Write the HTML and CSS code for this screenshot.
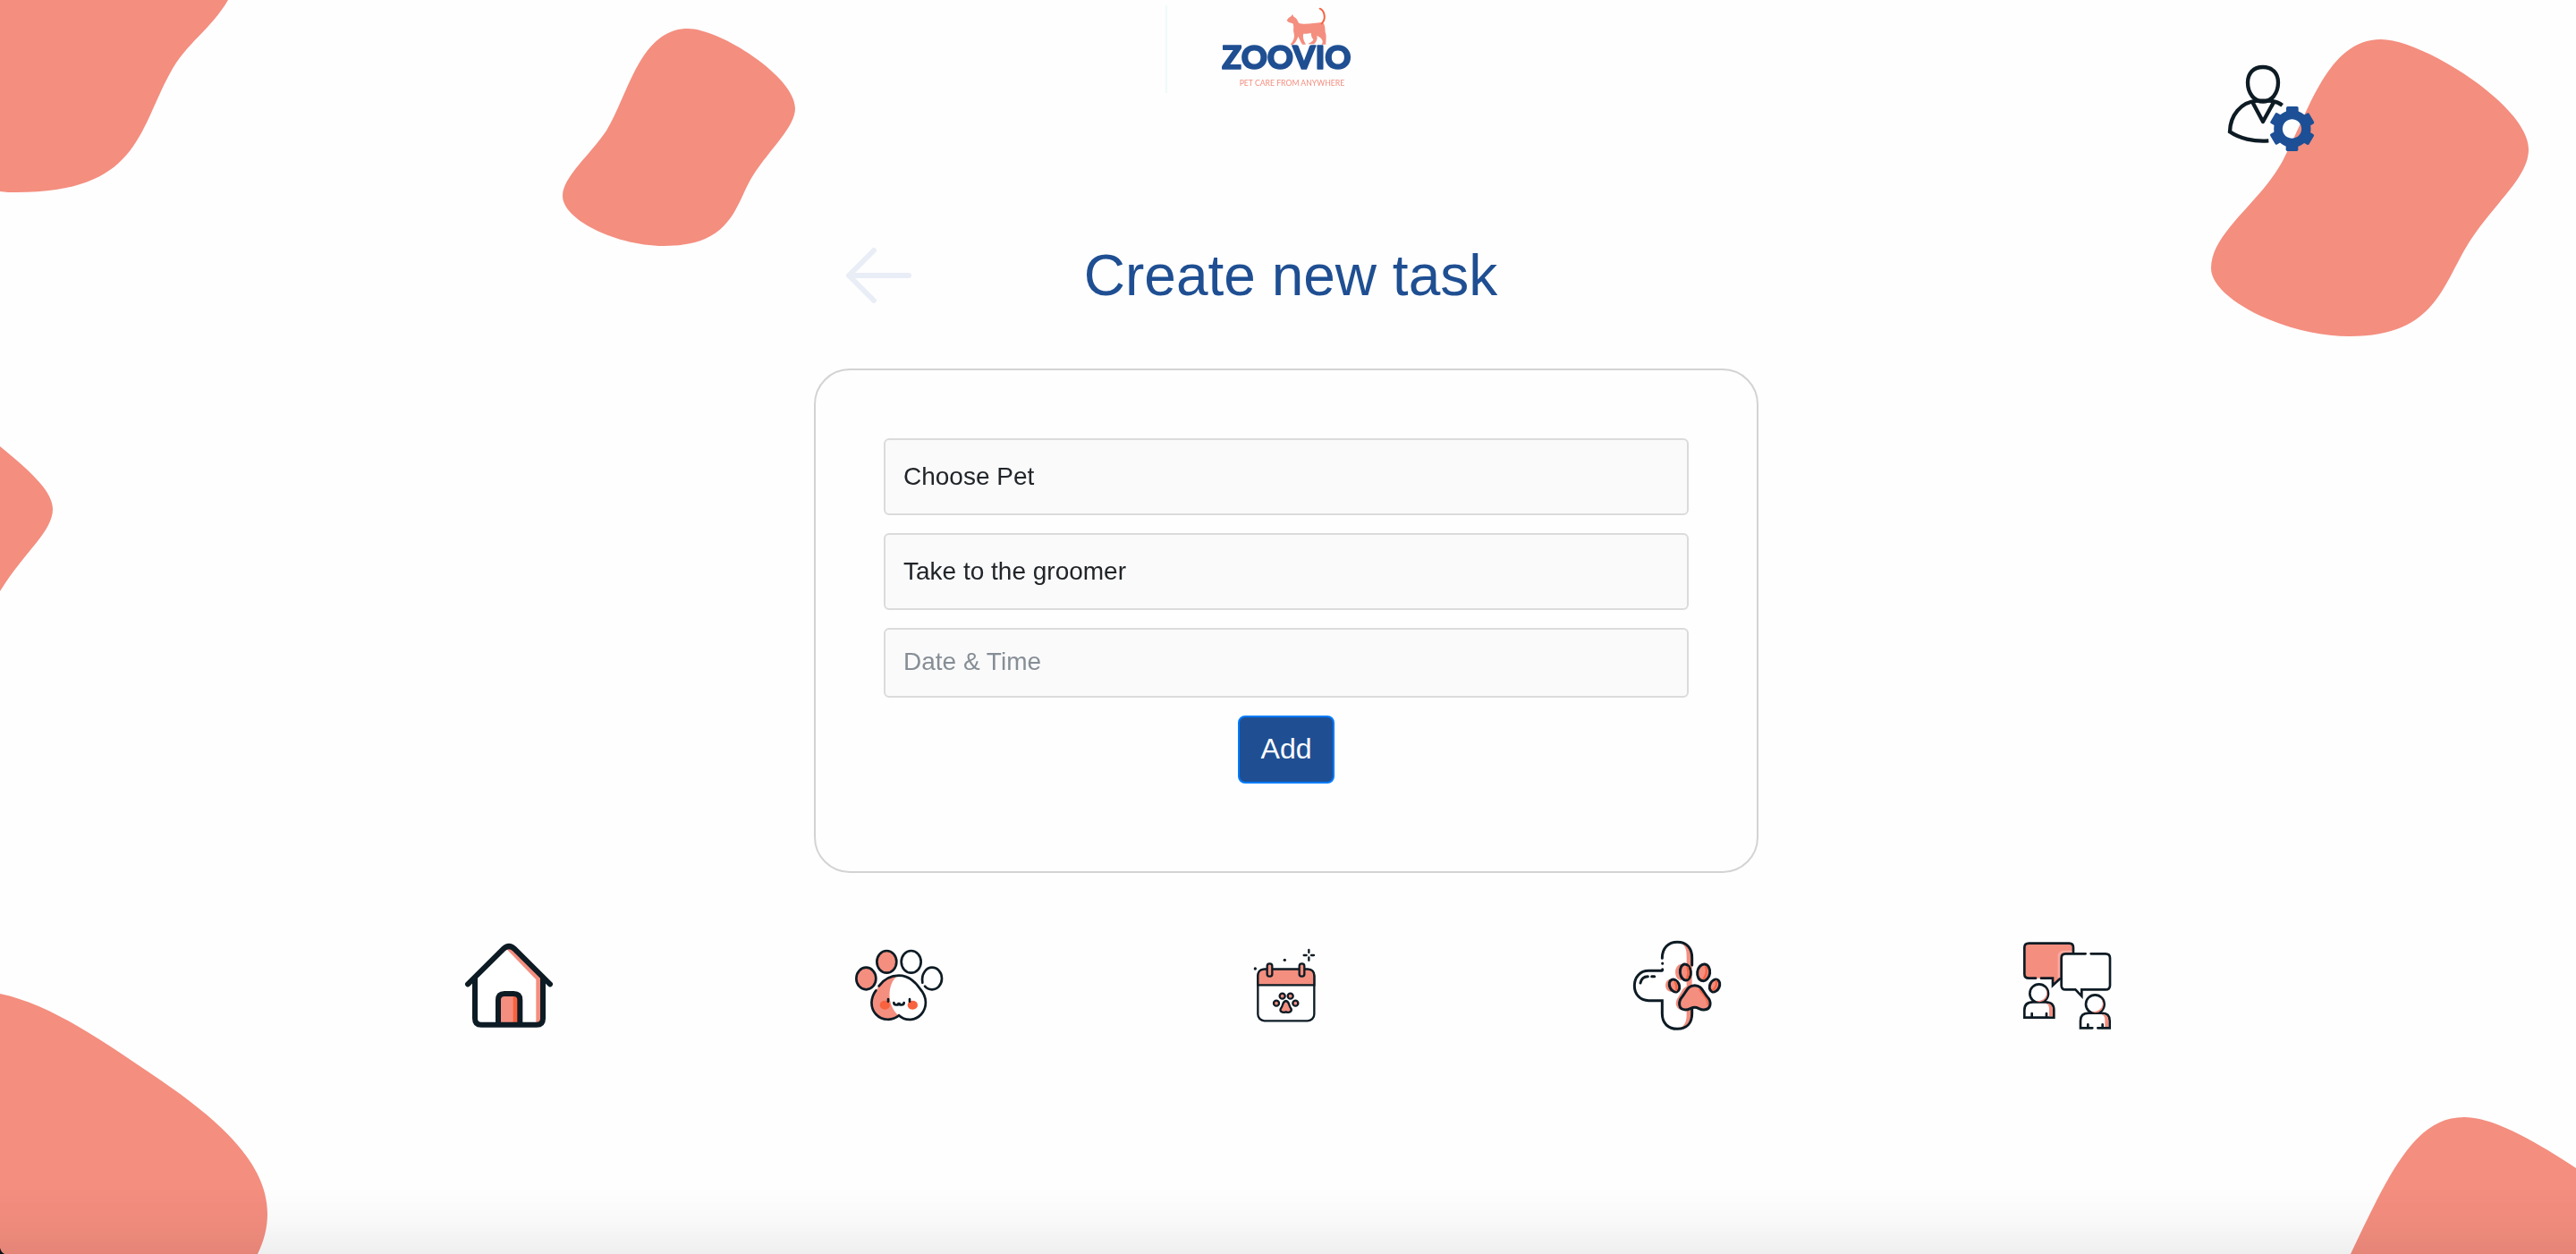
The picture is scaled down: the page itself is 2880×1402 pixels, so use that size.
FILE: index.html
```html
<!DOCTYPE html>
<html lang="en">
<head>
<meta charset="utf-8">
<meta name="viewport" content="width=device-width, initial-scale=1">
<title>Zoovio - Create new task</title>
<link rel="stylesheet" href="styles.css">
</head>
<body>
<svg class="backdrop" viewBox="0 0 2880 1402" preserveAspectRatio="xMidYMid slice" aria-hidden="true">
  <path d="M0 0H255C235 34 209 47 190 82C154 148 154 215 18 215C12 215 6 215 0 214Z"/>
  <path d="M769 32C805 32 889 86 889 121C889 142 862 165 842 196C822 227 821 275 742 275C690 275 629 246 629 219C629 198 660 173 678 146C702 108 715 32 769 32Z"/>
  <path d="M0 499C30 524 59 548 59 569C59 594 29 615 0 661Z"/>
  <path d="M2662 44C2708 44 2827 118 2827 167C2827 198 2790 226 2763 267C2731 315 2726 376 2627 376C2555 376 2472 334 2472 300C2472 260 2526 228 2552 180C2582 124 2602 44 2662 44Z"/>
  <path d="M0 1111C58 1123 118 1166 180 1208C250 1256 299 1303 299 1357C299 1373 295 1388 288 1402H0Z"/>
  <path d="M2880 1306C2830 1273 2786 1249 2755 1249C2700 1249 2672 1310 2628 1402H2880Z"/>
  <path d="M0 1395Q1 1400 5 1402H0Z" fill="#10141c"/>
</svg>

<header class="header">
  <a class="logo" href="#" aria-label="Zoovio">
    <svg viewBox="39 0 822 330" width="274" height="110">
      <path d="M42 18V312" stroke="#eefbf8" stroke-width="6"/>
      <path d="M446 68L452 60L461 54L465 48L470 57C480 61 482 70 487 78C505 84 540 77 563 75C575 78 574 96 575 108C580 121 577 132 577 149H562C570 142 566 134 558 126L547 119C550 130 544 142 537 148H517C525 142 534 139 535 132C528 126 528 116 527 110C520 113 508 114 502 113C498 126 504 138 510 149H498C490 136 487 127 484 122C480 134 474 146 465 150H458C464 142 474 130 470 112C466 100 472 90 466 79C460 75 452 78 446 68Z" fill="#f48e7f"/>
      <path d="M563 79C578 64 574 37 557 29" fill="none" stroke="#f8623f" stroke-width="6" stroke-linecap="round"/>
      <text class="logo-name" x="229" y="230">ZOOVIO</text>
      <text class="logo-tag" x="287" y="288">PET CARE FROM ANYWHERE</text>
    </svg>
  </a>
  <a class="profile" href="#" aria-label="Profile settings">
    <svg viewBox="0 0 420 360" width="140" height="120" fill="none" stroke="#0d1b24" stroke-width="13">
      <path d="M180 45C212 45 231 66 231 97C231 135 207 161 180 161C153 161 129 135 129 97C129 66 148 45 180 45Z"/>
      <path d="M245 173C233 164 218 159 200 158H160C106 162 70 207 69 262C100 284 150 296 199 292"/>
      <path d="M145 163L180 228L216 163" stroke-linejoin="round"/>
      <g stroke="none" fill="#1c4f95">
        <path fill-rule="evenodd" d="M278 190a62 62 0 1 0 1 0ZM278 220a32 32 0 1 1 -1 0Z"/>
        <rect x="258" y="177" width="41" height="30" rx="5"/>
        <rect x="258" y="177" width="41" height="30" rx="5" transform="rotate(60 278 252)"/>
        <rect x="258" y="177" width="41" height="30" rx="5" transform="rotate(120 278 252)"/>
        <rect x="258" y="177" width="41" height="30" rx="5" transform="rotate(180 278 252)"/>
        <rect x="258" y="177" width="41" height="30" rx="5" transform="rotate(240 278 252)"/>
        <rect x="258" y="177" width="41" height="30" rx="5" transform="rotate(300 278 252)"/>
      </g>
    </svg>
  </a>
</header>

<main class="main">
  <div class="title-row">
    <a class="back" href="#" aria-label="Back">
      <svg viewBox="0 0 76 64" width="76" height="64" fill="none" stroke="#e9edf6" stroke-width="6" stroke-linecap="round" stroke-linejoin="round"><path d="M33 4L5 32L33 60M5 32H72"/></svg>
    </a>
    <h1 class="title">Create new task</h1>
  </div>
  <form class="card">
    <select class="field" aria-label="Pet"><option>Choose Pet</option></select>
    <select class="field" aria-label="Task"><option>Take to the groomer</option></select>
    <input class="field field-date" type="text" placeholder="Date &amp; Time" aria-label="Date &amp; Time">
    <button class="add" type="button">Add</button>
  </form>
</main>

<nav class="nav" aria-label="Main">
  <a href="#" aria-label="Home">
    <svg class="nav-icon" viewBox="0 0 360 360" fill="none" stroke="#0d1b24" stroke-width="18" stroke-linecap="round">
      <path d="M63 160L177 50L291 160V317H63Z" fill="#fff" stroke="none"/>
      <path d="M166 60H190L285 155V312H268V166Z" fill="#f48e7f" stroke="none"/>
      <path d="M141 222H200V312H141Z" fill="#f48e7f" stroke="none"/>
      <path d="M191 220H210V312H191Z" fill="#f8623f" stroke="none"/>
      <path d="M39 181L158 63Q177 45 196 63L315 181"/>
      <path d="M63 160V296Q63 317 84 317H270Q291 317 291 296V160"/>
      <path d="M141 312V234Q141 213 162 213H193Q214 213 214 234V312"/>
    </svg>
  </a>
  <a href="#" aria-label="My pets">
    <svg class="nav-icon" viewBox="0 -30 360 360" fill="none" stroke="#0d1b24" stroke-width="8" stroke-linecap="round">
      <g fill="#f48e7f"><ellipse cx="70" cy="132" rx="33" ry="37"/><ellipse cx="139" cy="76" rx="33" ry="37"/></g>
      <ellipse cx="221" cy="76" rx="33" ry="37" fill="#fff"/>
      <path d="M259 146C254 116 272 95 291 95C310 95 324 112 324 132C324 152 310 169 291 169C281 169 273 165 267 158" fill="#fff"/>
      <path d="M112 158C130 133 155 122 180 122C215 122 236 144 252 168C274 193 276 228 255 252C234 275 200 275 180 256C160 274 124 275 103 252C83 230 84 197 103 172Z" fill="#fff" stroke="none"/>
      <path d="M112 158C130 135 150 125 174 124C141 151 138 219 178 256C158 274 124 275 103 252C83 230 84 197 103 172Z" fill="#f48e7f" stroke="none"/>
      <path d="M113 157C131 133 155 122 180 122C215 122 236 144 252 168C274 193 276 228 255 252C234 275 200 275 180 256C160 274 124 275 103 252C83 230 84 197 103 172"/>
      <g fill="#f8623f" stroke="none"><ellipse cx="133" cy="221" rx="17" ry="15"/><ellipse cx="226" cy="221" rx="17" ry="15"/></g>
      <path d="M144 201V209M216 201V209M163 213C163 223 179 223 180 213C181 223 197 223 197 213"/>
    </svg>
  </a>
  <a href="#" aria-label="Calendar">
    <svg class="nav-icon" viewBox="-30 -30 360 360" fill="none" stroke="#0d1b24" stroke-width="7" stroke-linecap="round">
      <rect x="49" y="101" width="189" height="173" rx="22" fill="#fff"/>
      <path d="M49 154V123Q49 101 71 101H216Q238 101 238 123V154Z" fill="#f48e7f"/>
      <rect x="80" y="82" width="17" height="43" rx="8" fill="#f48e7f"/><rect x="188" y="82" width="17" height="43" rx="8" fill="#f48e7f"/>
      <g fill="#f48e7f"><circle cx="131" cy="191" r="9"/><circle cx="158" cy="191" r="9"/><circle cx="111" cy="215" r="9"/><circle cx="175" cy="215" r="9"/>
      <path d="M143 207C155 208 152 223 159 231C166 241 155 249 143 244C131 249 119 241 127 231C134 223 131 208 143 207Z"/></g>
      <path d="M220 36V45M220 61V71M203 54H212M228 54H237"/>
      <g fill="#0d1b24" stroke="none"><circle cx="139" cy="70" r="5"/><circle cx="40" cy="99" r="5"/></g>
    </svg>
  </a>
  <a href="#" aria-label="Vet care">
    <svg class="nav-icon" viewBox="0 0 360 360" fill="none" stroke="#0d1b24" stroke-width="9" stroke-linecap="round">
      <path d="M130 92C130 60 150 40 181 40C212 40 230 60 230 92V280C230 312 212 331 181 331C150 331 130 312 130 280V236H85C55 236 37 214 37 186C37 158 55 136 85 136H130Z" fill="#fff" stroke="none"/>
      <path d="M190 40C218 44 230 65 230 92V280C230 306 216 328 188 331C211 316 212 300 212 280V92C212 70 211 54 190 40Z" fill="#f48e7f" stroke="none"/>
      <g fill="#f48e7f" stroke="none"><ellipse cx="192" cy="141" rx="18" ry="27"/><ellipse cx="157" cy="185" rx="16" ry="21"/><path d="M226 183C195 190 195 210 184 224C170 241 176 262 192 267H220Z"/></g>
      <path d="M130 94C130 60 150 40 181 40C212 40 230 60 230 92V117M131 111V112M131 131Q131 136 125 136H85C55 136 37 158 37 186C37 214 55 236 85 236H130V280C130 312 150 331 181 331C212 331 230 312 230 280V264M57 177C60 162 70 155 82 155M95 155H104"/>
      <path d="M217 123C224 137 222 150 216 162M279 121C288 136 281 151 272 164M178 172C184 184 184 194 180 203M315 170C319 182 311 195 303 202" stroke="#f8623f" stroke-width="9"/>
      <g fill="#f48e7f"><ellipse cx="208" cy="141" rx="18" ry="27" transform="rotate(-6 208 141)"/><ellipse cx="269" cy="142" rx="21" ry="28" transform="rotate(8 269 142)"/><ellipse cx="171" cy="186" rx="16" ry="22" transform="rotate(-25 171 186)"/><ellipse cx="306" cy="186" rx="16" ry="22" transform="rotate(25 306 186)"/></g>
      <path d="M215 125C219 139 218 149 214 160M276 123C283 138 277 151 270 162M174 175C179 186 179 193 177 201M311 171C314 182 308 193 301 200" stroke="#f8623f" stroke-width="7"/>
      <path d="M239 185C262 185 266 205 280 222C298 240 294 266 270 267C255 267 252 259 239 259C226 259 222 267 208 267C184 266 182 240 198 222C212 205 216 185 239 185Z" fill="#f48e7f"/>
      <path d="M255 200C265 216 286 231 282 250" stroke="#f8623f" stroke-width="4"/>
    </svg>
  </a>
  <a href="#" aria-label="Community">
    <svg class="nav-icon" viewBox="0 0 360 360" fill="none" stroke="#0d1b24" stroke-width="8" stroke-linecap="round">
      <path d="M135 161H55Q40 161 40 147V58Q40 44 55 44H190Q204 44 204 58V161H160L135 185Z" fill="#f48e7f" stroke="none"/>
      <path d="M156 160V88Q156 72 172 72H203" stroke="#f8aaa0" stroke-width="8"/>
      <path d="M78 161H55Q40 161 40 147V58Q40 44 55 44H190Q204 44 204 58V74M96 161H135V185L159 163"/>
      <path d="M245 79H178Q164 79 164 93V185Q164 199 178 199H211L232 221V199H312Q327 199 327 185V93Q327 79 312 79H263" fill="#fff"/>
      <g fill="#fff"><circle cx="89" cy="212" r="31"/><path d="M40 293V268Q40 241 68 241H110Q139 241 139 268V293Z"/></g>
      <g fill="#f48e7f" stroke="none"><path d="M106 190C124 208 113 239 78 238C96 246 117 235 117 212C117 202 112 194 106 190Z"/><path d="M112 245C130 245 135 255 135 268V289H123V265C123 255 121 250 112 245Z"/></g>
      <path d="M65 279V290M114 279V290"/>
      <g fill="#fff"><circle cx="277" cy="248" r="31"/><path d="M268 328H228V304Q228 278 255 278H299Q326 278 326 304V328H286"/></g>
      <g fill="#f48e7f" stroke="none"><path d="M294 226C312 244 301 275 266 274C284 282 305 271 305 248C305 238 300 230 294 226Z"/><path d="M299 282C318 282 322 292 322 304V324H310V302C310 292 308 287 299 282Z"/></g>
      <path d="M253 316V325M302 316V325"/>
    </svg>
  </a>
</nav>
<div class="window-shade" aria-hidden="true"></div>
</body>
</html>
```

FILE: styles.css
```css
* {
  box-sizing: border-box;
}

body {
  margin: 0;
  min-height: 100vh;
  background: #fefefe;
  color: #212529;
  font-family: "Liberation Sans", Arial, sans-serif;
  font-size: 28px;
}

svg {
  display: block;
}

/* Decorative shapes behind the page */
.backdrop {
  position: fixed;
  inset: 0;
  z-index: -1;
  width: 100%;
  height: 100%;
  fill: #f48e7f;
}

.header {
  display: grid;
  grid-template-columns: 1fr auto 1fr;
  align-items: start;
}

.logo {
  grid-column: 2;
}

.logo-name {
  font-family: Lato, sans-serif;
  font-size: 108px;
  font-weight: 900;
  fill: #1f4f92;
  stroke: #1f4f92;
  stroke-width: 5px;
  stroke-linejoin: round;
}

.logo-tag {
  font-family: Lato, sans-serif;
  font-size: 26px;
  fill: #f48e7f;
}

.profile {
  justify-self: end;
  margin: 60px 270px 0 0;
}

.main {
  width: 100%;
  max-width: 1060px;
  margin: 90px auto 0;
  padding-right: 4px;
}

.title-row {
  display: grid;
  grid-template-columns: 110px 1fr 100px;
  align-items: center;
  margin-bottom: 66px;
}

.back {
  justify-self: end;
}

.title {
  margin: 0;
  color: #1f4f92;
  font-size: 64px;
  font-weight: 400;
  line-height: 76px;
  text-align: center;
}

.card {
  display: flex;
  flex-direction: column;
  gap: 20px;
  padding: 76px 76px 98px;
  border: 2px solid #d3d3d3;
  border-radius: 40px;
  background: #fefefe;
}

.field {
  width: 100%;
  height: 86px;
  padding: 0 20px 2px;
  border: 2px solid #dbdbdb;
  border-radius: 6px;
  background: #fafafa;
  color: #212529;
  font: inherit;
  appearance: none;
}

.field-date {
  height: 78px;
}

.field::placeholder {
  color: #868e96;
  opacity: 1;
}

.add {
  align-self: center;
  height: 76px;
  padding: 0 24px 2px;
  border: 2px solid #007bff;
  border-radius: 8px;
  background: #1f4f92;
  color: #fff;
  font: inherit;
  font-size: 32px;
}

.nav {
  display: grid;
  grid-template-columns: repeat(5, 1fr);
  justify-items: center;
  max-width: 2175px;
  margin: 64px auto 0;
}

.nav-icon {
  width: 120px;
  height: 120px;
}

.window-shade {
  position: fixed;
  inset: auto 0 0;
  height: 76px;
  background: linear-gradient(rgba(0, 0, 0, 0), rgba(0, 0, 0, 0.02) 50%, rgba(0, 0, 0, 0.06));
  pointer-events: none;
}
```
